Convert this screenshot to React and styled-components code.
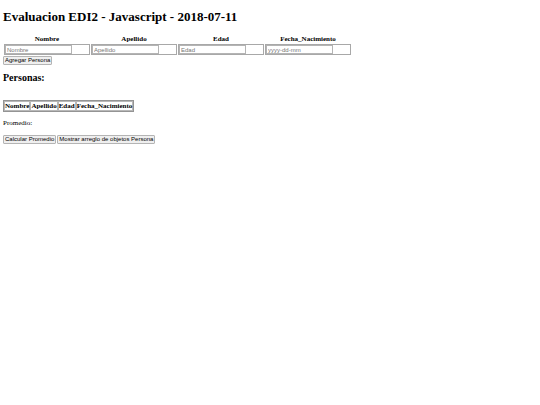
import styled, { createGlobalStyle } from "styled-components";

const GlobalStyle = createGlobalStyle`
  * {
    box-sizing: border-box;
  }
  body {
    margin: 0;
    background: white;
    color: black;
    font-family: "Liberation Serif", "Times New Roman", serif;
    font-size: 7px;
    line-height: 8px;
  }
`;

const Wrap = styled.main`
  padding: 9px 0 9px 3px;
`;

const Title = styled.h1`
  margin: 0 0 10px;
  font-size: 13px;
  line-height: 16px;
`;

const Subtitle = styled.h2`
  margin: 7px 0 16px;
  font-size: 10px;
  line-height: 12px;
`;

const FormTable = styled.table`
  width: 65%;
  table-layout: fixed;
  border-collapse: separate;
  border-spacing: 1px 0;
  th {
    padding: 0 0 1px;
  }
  td {
    padding: 0;
    border: 1px solid #a8a8a8;
  }
`;

const Input = styled.input`
  display: block;
  width: 80%;
  height: 9px;
  padding: 0 1px;
  border: 1px solid #b4b4b4;
  background: white;
  font-family: "Liberation Sans", Arial, sans-serif;
  font-size: 6px;
  line-height: 7px;
  &::placeholder {
    color: #757575;
  }
`;

const Button = styled.button`
  height: 9px;
  padding: 0 1px;
  border: 1px solid #b4b4b4;
  border-radius: 1px;
  background: #efefef;
  color: black;
  font-family: "Liberation Sans", Arial, sans-serif;
  font-size: 6px;
  line-height: 7px;
`;

const Actions = styled.div`
  display: flex;
  gap: 1px;
  margin-top: ${(props) => props.$top}px;
`;

const ListTable = styled.table`
  border: 1px solid #949494;
  border-collapse: separate;
  border-spacing: 0;
  th {
    padding: 0;
    border: 1px solid #b8b8b8;
  }
`;

const Average = styled.p`
  margin: 7px 0 0;
`;

const fields = [
  { id: "nombre", label: "Nombre", placeholder: "Nombre" },
  { id: "apellido", label: "Apellido", placeholder: "Apellido" },
  { id: "edad", label: "Edad", placeholder: "Edad" },
  { id: "fecha", label: "Fecha_Nacimiento", placeholder: "yyyy-dd-mm" },
];

export default function App() {
  return (
    <>
      <GlobalStyle />
      <Wrap>
        <Title>Evaluacion EDI2 - Javascript - 2018-07-11</Title>

        <FormTable>
          <thead>
            <tr>
              {fields.map((field) => (
                <th key={field.id}>
                  <label htmlFor={field.id}>{field.label}</label>
                </th>
              ))}
            </tr>
          </thead>
          <tbody>
            <tr>
              {fields.map((field) => (
                <td key={field.id}>
                  <Input
                    id={field.id}
                    type="text"
                    placeholder={field.placeholder}
                  />
                </td>
              ))}
            </tr>
          </tbody>
        </FormTable>
        <Actions $top={1}>
          <Button type="button">Agregar Persona</Button>
        </Actions>

        <Subtitle>Personas:</Subtitle>

        <ListTable>
          <thead>
            <tr>
              {fields.map((field) => (
                <th key={field.id}>{field.label}</th>
              ))}
            </tr>
          </thead>
          <tbody></tbody>
        </ListTable>

        <Average>Promedio:</Average>

        <Actions $top={8}>
          <Button type="button">Calcular Promedio</Button>
          <Button type="button">Mostrar arreglo de objetos Persona</Button>
        </Actions>
      </Wrap>
    </>
  );
}
